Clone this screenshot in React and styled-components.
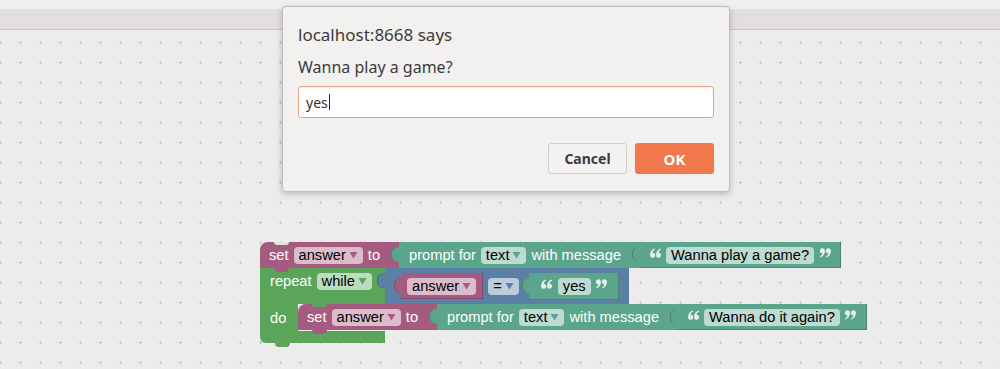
import React from "react";
import styled, { createGlobalStyle, css } from "styled-components";

const COLORS = {
  magenta: "#a55b80",
  green: "#5ba55b",
  teal: "#5ba58c",
  blue: "#5b80a5",
};
const LIGHT = {
  magenta: "#dbbccb",
  green: "#bddbbd",
  teal: "#bddbd1",
  blue: "#bdccdb",
};
const DARK = {
  magenta: "#844866",
  green: "#498449",
  teal: "#498470",
  blue: "#496684",
};

const Global = createGlobalStyle`
  html, body { margin: 0; padding: 0; width: 1000px; height: 369px; overflow: hidden; }
  body { font-family: "Liberation Sans", Arial, sans-serif; }
`;

const Page = styled.div`
  position: relative;
  width: 1000px;
  height: 369px;
  display: flex;
  flex-direction: column;
  background: #ececec;
`;

const TopStrip = styled.div`
  height: 9px;
  background: #f0f0f2;
`;

const Toolbar = styled.div`
  height: 20px;
  background: #e4dfdf;
  border-bottom: 1px solid #c9c5c5;
`;

const Workspace = styled.div`
  position: relative;
  flex: 1;
  background-color: #ececec;
  background-image: url("data:image/svg+xml,%3Csvg xmlns='http://www.w3.org/2000/svg' width='20' height='20'%3E%3Crect x='9' y='8' width='1' height='3' fill='%23c8c8c8'/%3E%3Crect x='8' y='9' width='3' height='1' fill='%23c8c8c8'/%3E%3C/svg%3E");
  background-size: 20px 20px;
  background-position: -9px 3px;
`;

const Stack = styled.div`
  position: absolute;
  left: 260px;
  top: 212px;
  display: flex;
  flex-direction: column;
  isolation: isolate;
`;

const Row = styled.div`
  display: flex;
  align-items: ${(p) => p.$align || "center"};
`;

const Block = styled.div`
  position: relative;
  display: flex;
  align-items: center;
  flex: none;
  box-sizing: border-box;
  height: ${(p) => p.$h || 26}px;
  gap: 5px;
  padding: 0 ${(p) => p.$pr ?? 10}px 0 ${(p) => p.$pl ?? 10}px;
  background: ${(p) => COLORS[p.$c]};
  color: #fff;
  font-size: 14.67px;
  white-space: nowrap;
  ${(p) =>
    p.$nested &&
    css`
      box-shadow: inset -1px -1px 0 ${DARK[p.$c]};
    `}
  ${(p) =>
    p.$output &&
    css`
      &::before {
        content: "";
        position: absolute;
        left: -${p.$tab || 8}px;
        top: 5px;
        width: ${p.$tab || 8}px;
        height: 15px;
        background: ${COLORS[p.$c]};
        border-radius: 7px 0 0 7px / 6px 0 0 6px;
        box-shadow: inset 1px 0 0 ${DARK[p.$c]};
      }
    `}
  ${(p) =>
    p.$statement &&
    css`
      border-top-left-radius: 8px;
      &::before {
        content: "";
        position: absolute;
        left: 14px;
        top: 0;
        width: 15px;
        height: 3px;
        background: ${p.$notchBg};
        border-radius: 0 0 6px 6px;
      }
      &::after {
        content: "";
        position: absolute;
        z-index: 2;
        left: 14px;
        bottom: -4px;
        width: 15px;
        height: 4px;
        background: ${COLORS[p.$c]};
        border-radius: 0 0 6px 6px;
      }
    `}
`;

const Label = styled.span`
  line-height: 17px;
`;

const Pill = styled.span`
  display: inline-flex;
  align-items: center;
  height: ${(p) => p.$h || 17}px;
  padding: 0 5px;
  border-radius: 4px;
  background: ${(p) => LIGHT[p.$c]};
  color: #000;
  line-height: 17px;
`;

const ArrowSvg = styled.svg`
  margin-left: 3px;
  flex: none;
  display: block;
`;

const QuoteBox = styled.span`
  width: 12px;
  height: 17px;
  display: flex;
  align-items: flex-start;
  justify-content: center;
  padding-top: 1px;
  box-sizing: border-box;
`;

const GreenHead = styled.div`
  width: 125px;
  box-sizing: border-box;
  height: 36px;
  background: ${COLORS.green};
  display: flex;
  align-items: flex-start;
`;

const HeadLine = styled.div`
  height: 26px;
  display: flex;
  align-items: center;
  gap: 5px;
  padding-left: 10px;
  color: #fff;
  font-size: 14.67px;
`;

const DoColumn = styled.div`
  width: 38px;
  height: 27px;
  box-sizing: border-box;
  padding-left: 10px;
  background: ${COLORS.green};
  display: flex;
  align-items: center;
  color: #fff;
  font-size: 14.67px;
`;

const BottomArm = styled.div`
  position: relative;
  width: 125px;
  height: 12px;
  background: ${COLORS.green};
  border-bottom-left-radius: 6px;
  &::after {
    content: "";
    position: absolute;
    left: 15px;
    bottom: -4px;
    width: 15px;
    height: 4px;
    background: ${COLORS.green};
    border-radius: 0 0 6px 6px;
  }
`;

/* ---------- dialog ---------- */

const Dialog = styled.div`
  position: absolute;
  left: 282px;
  top: 6px;
  width: 448px;
  height: 186px;
  box-sizing: border-box;
  background: #f2f1f0;
  border: 1px solid #bfbcb9;
  border-radius: 4px;
  box-shadow: 0 2px 6px rgba(0, 0, 0, 0.22);
  padding: 18px 15px 0 15px;
  display: flex;
  flex-direction: column;
  font-family: "Noto Sans", "Open Sans", sans-serif;
  color: #3c3c3c;
`;

const Title = styled.div`
  font-size: 17px;
  line-height: 20px;
`;

const Message = styled.div`
  margin-top: 12px;
  font-size: 16px;
  line-height: 20px;
`;

const Input = styled.div`
  margin-top: 9px;
  height: 32px;
  box-sizing: border-box;
  border: 1px solid #e9a184;
  border-radius: 3px;
  background: #fff;
  box-shadow: inset 0 1px 2px rgba(0, 0, 0, 0.06);
  display: flex;
  align-items: center;
  padding-left: 7px;
  font-size: 14px;
  color: #333;
`;

const Caret = styled.span`
  display: inline-block;
  width: 1px;
  height: 16px;
  background: #222;
  margin-left: 1px;
`;

const Buttons = styled.div`
  margin-top: 25px;
  display: flex;
  justify-content: flex-end;
  gap: 8px;
`;

const Button = styled.div`
  width: 79px;
  height: 31px;
  box-sizing: border-box;
  border-radius: 3px;
  display: flex;
  align-items: center;
  justify-content: center;
  font-size: 14px;
  font-weight: bold;
  ${(p) =>
    p.$primary
      ? css`
          background: #f0784a;
          color: #fff;
          font-size: 15px;
        `
      : css`
          background: #f3f2f1;
          color: #3c3c3c;
          border: 1px solid #d2cecb;
        `}
`;

function Arrow({ c }) {
  return (
    <ArrowSvg width="9" height="8" viewBox="0 0 9 8">
      <polygon points="0.5,1 8.5,1 4.5,7.5" fill={COLORS[c]} />
    </ArrowSvg>
  );
}

/* one comma-like mark: a ball with a tail */
function Mark({ x, flip }) {
  const t = flip
    ? `translate(${x + 5} 10) rotate(180)`
    : `translate(${x} 0)`;
  return (
    <g transform={t}>
      <circle cx="2.6" cy="7.2" r="2.5" />
      <path d="M0.2 7.2 C0.1 4 1.6 1.6 4.6 0.6 L5 1.6 C3.4 2.5 2.7 3.6 2.6 4.7 Z" />
    </g>
  );
}

function Quote({ close }) {
  return (
    <QuoteBox>
      <svg width="11" height="10" viewBox="0 0 11 10" fill="#e6f2ee">
        <Mark x={0} flip={close} />
        <Mark x={6} flip={close} />
      </svg>
    </QuoteBox>
  );
}

function Dropdown({ c, children }) {
  return (
    <Pill $c={c}>
      {children}
      <Arrow c={c} />
    </Pill>
  );
}

function TextBlock({ text }) {
  return (
    <Block $c="teal" $output $nested $pl={10} $pr={10} $tab={7}>
      <Quote />
      <Pill $c="teal">{text}</Pill>
      <Quote close />
    </Block>
  );
}

function SetPrompt({ notchBg, message }) {
  return (
    <Row>
      <Block $c="magenta" $statement $notchBg={notchBg} $pl={9} $pr={19}>
        <Label>set</Label>
        <Dropdown c="magenta">answer</Dropdown>
        <Label>to</Label>
      </Block>
      <Block $c="teal" $output $pl={10} $pr={18}>
        <Label>prompt for</Label>
        <Dropdown c="teal">text</Dropdown>
        <Label>with message</Label>
      </Block>
      <TextBlock text={message} />
    </Row>
  );
}

export default function App() {
  return (
    <>
      <Global />
      <Page>
        <TopStrip />
        <Toolbar />
        <Workspace>
          <Stack>
            <SetPrompt notchBg="#e2e2e2" message="Wanna play a game?" />
            <Row $align="flex-start">
              <GreenHead>
                <HeadLine>
                  <Label>repeat</Label>
                  <Dropdown c="green">while</Dropdown>
                </HeadLine>
              </GreenHead>
              <Block $c="blue" $output $h={36} $pl={16} $pr={10}>
                <Block $c="magenta" $output $nested $tab={7} $pl={6} $pr={7}>
                  <Dropdown c="magenta">answer</Dropdown>
                </Block>
                <Dropdown c="blue">=</Dropdown>
                <Block
                  $c="teal"
                  $output
                  $nested
                  $tab={7}
                  $h={27}
                  $pl={12}
                  $pr={11}
                  style={{ marginLeft: 5 }}
                >
                  <Quote />
                  <Pill $c="teal">yes</Pill>
                  <Quote close />
                </Block>
              </Block>
            </Row>
            <Row $align="flex-start">
              <DoColumn>do</DoColumn>
              <SetPrompt notchBg={COLORS.green} message="Wanna do it again?" />
            </Row>
            <BottomArm />
          </Stack>
        </Workspace>
        <Dialog>
          <Title>localhost:8668 says</Title>
          <Message>Wanna play a game?</Message>
          <Input>
            yes
            <Caret />
          </Input>
          <Buttons>
            <Button>Cancel</Button>
            <Button $primary>OK</Button>
          </Buttons>
        </Dialog>
      </Page>
    </>
  );
}
